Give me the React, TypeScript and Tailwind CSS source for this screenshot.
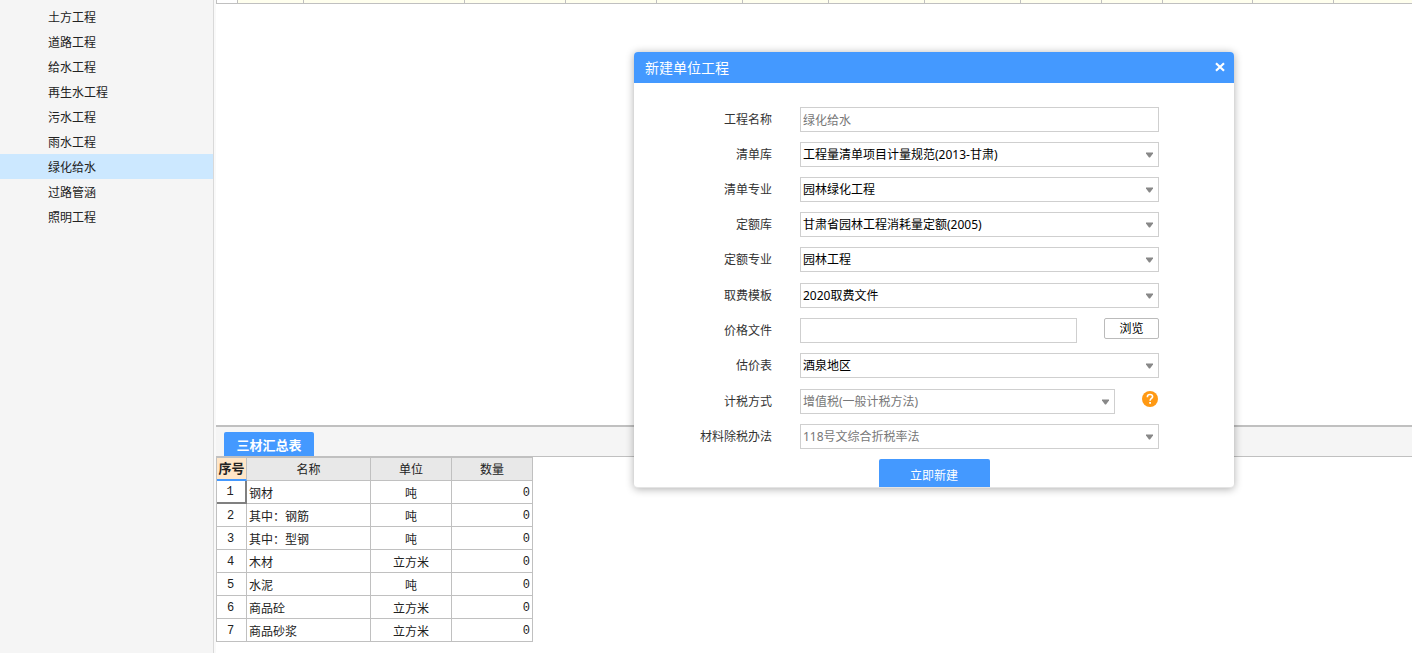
// 单位工程列表 + 三材汇总表 + 新建单位工程弹窗

import { useId, type ReactNode } from 'react'

const projects = ['土方工程', '道路工程', '给水工程', '再生水工程', '污水工程', '雨水工程', '绿化给水', '过路管涵', '照明工程']

const materials = [
  { name: '钢材', unit: '吨', qty: 0 },
  { name: '其中：钢筋', unit: '吨', qty: 0 },
  { name: '其中：型钢', unit: '吨', qty: 0 },
  { name: '木材', unit: '立方米', qty: 0 },
  { name: '水泥', unit: '吨', qty: 0 },
  { name: '商品砼', unit: '立方米', qty: 0 },
  { name: '商品砂浆', unit: '立方米', qty: 0 },
]

const gridColumns = [
  'w-[21px] bg-white',
  'w-[66px]',
  'w-[161px]',
  'w-[101px]',
  'w-[91px]',
  'w-[86px]',
  'w-[86px]',
  'w-[96px]',
  'w-[96px]',
  'w-[81px]',
  'w-[61px]',
  'w-[90px]',
  'w-[81px]',
]

/** 左侧单位工程列表 */
function Sidebar() {
  return (
    <nav className="w-[214px] shrink-0 border-r border-[#d9d9d9] bg-[#f5f5f5] pt-1">
      <ul>
        {projects.map((name) => (
          <li key={name}>
            <a
              href="#"
              className={`block pt-0.5 pl-12 text-xs leading-[23px] text-[#222] ${name === '绿化给水' ? 'bg-[#cce8ff]' : ''}`}
            >
              {name}
            </a>
          </li>
        ))}
      </ul>
    </nav>
  )
}

/** 底部三材汇总表 */
function SummaryPanel() {
  return (
    <section className="pb-[11px]">
      <div className="flex items-end border-t-2 border-b border-[#c0c0c0] bg-[#f5f5f5] pt-[5px] pl-2">
        <button className="h-6 w-[90px] rounded-t-xs bg-[#4499ff] pt-0.5 text-[13px] leading-5 font-bold text-white">三材汇总表</button>
      </div>
      <table className="table-fixed border-separate border-spacing-0 border-t border-l border-[#c0c0c0] text-xs text-[#222]">
        <thead>
          <tr className="h-[23px]">
            <th className="w-[30px] border-r border-b-2 border-r-[#c0c0c0] border-b-[#4499ff] bg-[#ffe6c8] p-0 text-[13px] leading-[21px] whitespace-nowrap">序号</th>
            <th className="w-[124px] border-r border-b border-[#c0c0c0] bg-[#e8e8e8] p-0 pt-0.5 leading-5 font-normal">名称</th>
            <th className="w-[81px] border-r border-b border-[#c0c0c0] bg-[#e8e8e8] p-0 pt-0.5 leading-5 font-normal">单位</th>
            <th className="w-[81px] border-r border-b border-[#c0c0c0] bg-[#e8e8e8] p-0 pt-0.5 leading-5 font-normal">数量</th>
          </tr>
        </thead>
        <tbody className="leading-[19px]">
          {materials.map((m, i) => (
            <tr key={m.name} className="h-[23px]">
              <td
                className={`pt-0.5 pr-0.5 text-center font-['Liberation_Mono',monospace] text-xs leading-[19px] ${
                  i === 0 ? 'border-r-2 border-b-2 border-[#808080]' : 'border-r border-b border-[#c0c0c0]'
                }`}
              >
                {i + 1}
              </td>
              <td className="border-r border-b border-[#c0c0c0] pt-[3px] pl-0.5">{m.name}</td>
              <td className="border-r border-b border-[#c0c0c0] pt-[3px] text-center">{m.unit}</td>
              <td className="border-r border-b border-[#c0c0c0] pt-[3px] pr-0.5 text-right font-['Liberation_Mono',monospace]">
                {m.qty}
              </td>
            </tr>
          ))}
        </tbody>
      </table>
    </section>
  )
}

/** 表单行：右对齐标签 + 控件 */
function Row({ id, label, children }: { id: string; label: string; children: ReactNode }) {
  return (
    <div className="flex items-start gap-7">
      <label htmlFor={id} className="w-[138px] shrink-0 text-right leading-[25px] text-[#333]">
        {label}
      </label>
      <div className="flex flex-1 items-start justify-between">{children}</div>
    </div>
  )
}

function Select({ id, value, muted, className = 'w-full' }: { id: string; value: string; muted?: boolean; className?: string }) {
  return (
    <div className={`relative ${className}`}>
      <select
        id={id}
        defaultValue={value}
        className={`block h-[25px] w-full appearance-none border border-[#cfcfcf] bg-white pr-5 pl-0.5 ${muted ? 'text-[#777]' : 'text-black'}`}
      >
        <option>{value}</option>
      </select>
      <svg className="pointer-events-none absolute top-[10px] right-[6px]" width="7" height="6" viewBox="0 0 7 6">
        <path d="M0 0.5h7v1L4 5.5H3L0 1.5z" fill="#888" />
      </svg>
    </div>
  )
}

function SelectRow({ label, value, muted }: { label: string; value: string; muted?: boolean }) {
  const id = useId()
  return (
    <Row id={id} label={label}>
      <Select id={id} value={value} muted={muted} />
    </Row>
  )
}

/** 新建单位工程弹窗 */
function CreateDialog() {
  return (
    <div
      role="dialog"
      aria-labelledby="dialog-title"
      className="absolute top-[52px] left-[634px] w-[600px] rounded border-b border-[#e4e4e4] bg-white shadow-[0_1px_8px_rgba(0,0,0,0.33)]"
    >
      <header className="flex h-[31px] items-center justify-between rounded-t bg-[#4499ff] pr-[9px] pl-[11px] text-white">
        <h2 id="dialog-title" className="text-sm">新建单位工程</h2>
        <button type="button" aria-label="关闭" className="pb-0.5">
          <svg width="10" height="10" viewBox="0 0 10 10">
            <path d="M1 1.2l8 7.6M9 1.2L1 8.8" stroke="#fff" strokeWidth="2.2" />
          </svg>
        </button>
      </header>

      <form className="flex flex-col pt-6 text-xs">
        <div className="flex flex-col gap-[11px] pr-[75px]">
          <div className="flex flex-col gap-2.5">
            <Row id="project-name" label="工程名称">
              <input id="project-name" defaultValue="绿化给水" className="h-[25px] w-full border border-[#cfcfcf] px-0.5 text-[#777]" />
            </Row>
            <SelectRow label="清单库" value="工程量清单项目计量规范(2013-甘肃)" />
            <SelectRow label="清单专业" value="园林绿化工程" />
            <SelectRow label="定额库" value="甘肃省园林工程消耗量定额(2005)" />
            <SelectRow label="定额专业" value="园林工程" />
          </div>
          <div className="flex flex-col gap-2.5">
            <SelectRow label="取费模板" value="2020取费文件" />
            <Row id="price-file" label="价格文件">
              <input id="price-file" className="h-[25px] w-[277px] border border-[#cfcfcf] px-0.5" />
              <button type="button" className="h-[21px] w-[55px] rounded-xs border border-[#bbb] bg-white leading-[19px] text-black">
                浏览
              </button>
            </Row>
            <SelectRow label="估价表" value="酒泉地区" />
          </div>
          <div className="flex flex-col gap-2.5">
            <Row id="tax-mode" label="计税方式">
              <Select id="tax-mode" value="增值税(一般计税方法)" muted className="w-[315px]" />
              <button type="button" aria-label="帮助" className="flex h-5 items-center">
                <svg width="17" height="16" viewBox="0 0 17 16">
                  <circle cx="8" cy="8" r="8" fill="#ff9913" />
                  <path d="M5.4 6.2V5.7C5.4 4.3 6.6 3.5 8 3.5s2.6.9 2.6 2.2c0 1.7-2.5 1.9-2.5 4" fill="none" stroke="#fff" strokeWidth="1.6" />
                  <path d="M7.2 11H9v1.8H7.2z" fill="#fff" />
                </svg>
              </button>
            </Row>
            <SelectRow label="材料除税办法" value="118号文综合折税率法" muted />
          </div>
        </div>
        <button type="button" className="mt-2.5 h-7 w-[111px] self-center rounded-t-xs bg-[#4499ff] pt-1.5 text-white">
          立即新建
        </button>
      </form>
    </div>
  )
}

export default function App() {
  return (
    <div className="relative flex min-h-screen overflow-hidden bg-[#f9f9f9] font-['Noto_Sans','Noto_Sans_CJK_SC',sans-serif]">
      <Sidebar />
      <main className="ml-0.5 flex min-w-0 flex-1 flex-col bg-white">
        <div className="flex-1">
          {/* 主表格末行 */}
          <div className="flex h-1 overflow-hidden border-b border-l border-[#c0c0c0] bg-[#ffffee]">
            {gridColumns.map((c, i) => (
              <div key={i} className={`shrink-0 border-r border-[#c0c0c0] ${c}`} />
            ))}
          </div>
        </div>
        <SummaryPanel />
      </main>
      <CreateDialog />
    </div>
  )
}
